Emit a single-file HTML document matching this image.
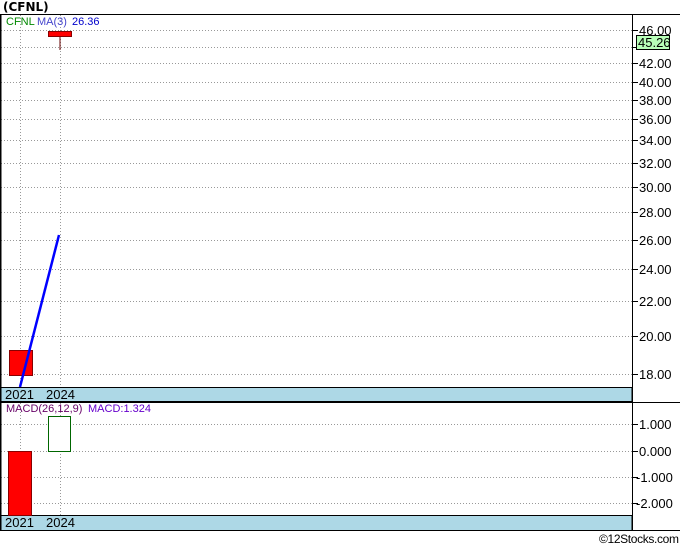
<!DOCTYPE html>
<html><head><meta charset="utf-8"><style>
html,body{margin:0;padding:0;background:#fff;}
svg{display:block;font-family:"Liberation Sans",sans-serif;}
</style></head><body>
<svg width="680" height="546" viewBox="0 0 680 546" xmlns="http://www.w3.org/2000/svg">
<rect x="0" y="0" width="680" height="546" fill="#fff"/>
<text x="3" y="11" font-size="12" font-weight="bold" fill="#000" font-family="DejaVu Sans">(CFNL)</text>
<line x1="0" y1="14.5" x2="680" y2="14.5" stroke="#000"/>
<line x1="0" y1="530.5" x2="680" y2="530.5" stroke="#000"/>
<g stroke="#999" stroke-dasharray="1,2" stroke-width="1">
<line x1="20.5" y1="15" x2="20.5" y2="387"/>
<line x1="60.5" y1="15" x2="60.5" y2="387"/>
<line x1="20.5" y1="403" x2="20.5" y2="515"/>
<line x1="60.5" y1="403" x2="60.5" y2="515"/>
<line x1="1" y1="30.5" x2="632" y2="30.5"/>
<line x1="1" y1="47.5" x2="632" y2="47.5"/>
<line x1="1" y1="63.5" x2="632" y2="63.5"/>
<line x1="1" y1="82.5" x2="632" y2="82.5"/>
<line x1="1" y1="100.5" x2="632" y2="100.5"/>
<line x1="1" y1="119.5" x2="632" y2="119.5"/>
<line x1="1" y1="140.5" x2="632" y2="140.5"/>
<line x1="1" y1="163.5" x2="632" y2="163.5"/>
<line x1="1" y1="187.5" x2="632" y2="187.5"/>
<line x1="1" y1="212.5" x2="632" y2="212.5"/>
<line x1="1" y1="240.5" x2="632" y2="240.5"/>
<line x1="1" y1="269.5" x2="632" y2="269.5"/>
<line x1="1" y1="301.5" x2="632" y2="301.5"/>
<line x1="1" y1="336.5" x2="632" y2="336.5"/>
<line x1="1" y1="374.5" x2="632" y2="374.5"/>
<line x1="1" y1="424.5" x2="632" y2="424.5"/>
<line x1="1" y1="451.5" x2="632" y2="451.5"/>
<line x1="1" y1="477.5" x2="632" y2="477.5"/>
<line x1="1" y1="503.5" x2="632" y2="503.5"/>
</g>
<rect x="0.5" y="387.5" width="631.5" height="14" fill="#add8e6" stroke="#000"/>
<rect x="0.5" y="515.5" width="631.5" height="15" fill="#add8e6" stroke="#000"/>
<line x1="0" y1="402.5" x2="680" y2="402.5" stroke="#000"/>
<line x1="632.5" y1="14" x2="632.5" y2="531" stroke="#000"/>
<line x1="0.5" y1="14" x2="0.5" y2="531" stroke="#000" stroke-width="2"/>
<g font-size="13" fill="#000">
<text x="5" y="399">2021</text><text x="46" y="399">2024</text>
<text x="5" y="527">2021</text><text x="46" y="527">2024</text>
</g>
<g stroke="#000">
<line x1="633" y1="30.5" x2="638" y2="30.5"/><line x1="633" y1="47.5" x2="638" y2="47.5"/>
<line x1="633" y1="63.5" x2="638" y2="63.5"/><line x1="633" y1="82.5" x2="638" y2="82.5"/>
<line x1="633" y1="100.5" x2="638" y2="100.5"/><line x1="633" y1="119.5" x2="638" y2="119.5"/>
<line x1="633" y1="140.5" x2="638" y2="140.5"/><line x1="633" y1="163.5" x2="638" y2="163.5"/>
<line x1="633" y1="187.5" x2="638" y2="187.5"/><line x1="633" y1="212.5" x2="638" y2="212.5"/>
<line x1="633" y1="240.5" x2="638" y2="240.5"/><line x1="633" y1="269.5" x2="638" y2="269.5"/>
<line x1="633" y1="301.5" x2="638" y2="301.5"/><line x1="633" y1="336.5" x2="638" y2="336.5"/>
<line x1="633" y1="374.5" x2="638" y2="374.5"/>
<line x1="633" y1="424.5" x2="638" y2="424.5"/><line x1="633" y1="451.5" x2="638" y2="451.5"/>
<line x1="633" y1="477.5" x2="638" y2="477.5"/><line x1="633" y1="503.5" x2="638" y2="503.5"/>
</g>
<g font-size="13" fill="#000">
<text x="639" y="35">46.00</text>
<text x="639" y="68">42.00</text><text x="639" y="87">40.00</text>
<text x="639" y="105">38.00</text><text x="639" y="124">36.00</text>
<text x="639" y="145">34.00</text><text x="639" y="168">32.00</text>
<text x="639" y="192">30.00</text><text x="639" y="217">28.00</text>
<text x="639" y="245">26.00</text><text x="639" y="274">24.00</text>
<text x="639" y="306">22.00</text><text x="639" y="341">20.00</text>
<text x="639" y="379">18.00</text>
<text x="639" y="429">1.000</text><text x="639" y="456">0.000</text>
<text x="636" y="482">-1.000</text><text x="636" y="508">-2.000</text>
</g>
<rect x="636.5" y="35.5" width="33" height="14" fill="#b8ffb8" stroke="#000"/>
<text x="638" y="47" font-size="13" fill="#000">45.26</text>
<rect x="9.5" y="350.5" width="23" height="25" fill="#f00" stroke="#800"/>
<line x1="60" y1="36" x2="60" y2="50" stroke="#600"/>
<rect x="48.5" y="31.5" width="23" height="5" fill="#f00" stroke="#800"/>
<line x1="20" y1="387" x2="59" y2="235" stroke="#00f" stroke-width="2.5"/>
<rect x="8.5" y="451.5" width="23" height="64" fill="#f00" stroke="#800"/>
<rect x="48.5" y="416.5" width="22" height="35" fill="#fff" stroke="#060"/>
<text x="6" y="25" font-size="11" fill="#080">CFNL</text>
<text x="37" y="25" font-size="11" fill="#44c">MA(3)</text>
<text x="72" y="25" font-size="11" fill="#00c">26.36</text>
<text x="6" y="412" font-size="11" fill="#606">MACD(26,12,9)</text>
<text x="88" y="412" font-size="11" fill="#60c">MACD:1.324</text>
<text x="599" y="543" font-size="12" fill="#000" textLength="80">©12Stocks.com</text>
</svg>
</body></html>
